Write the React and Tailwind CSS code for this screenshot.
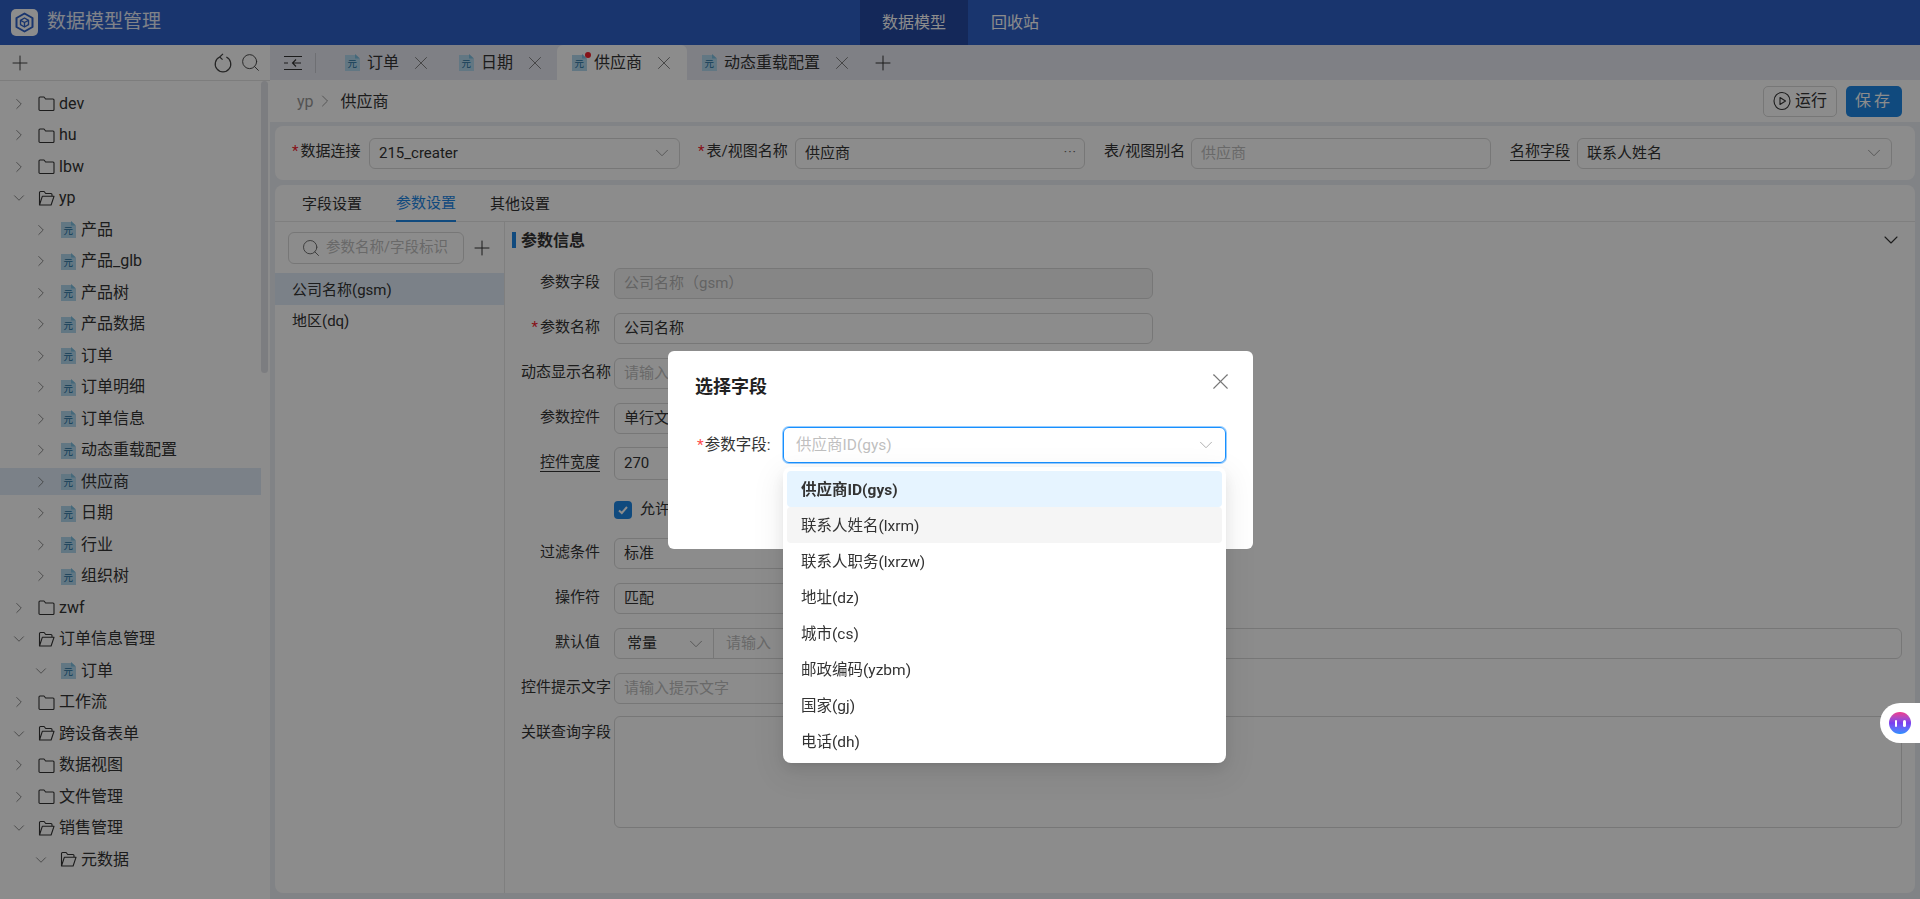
import React from 'react';
import { Plus, Search, X, ChevronDown, ChevronRight } from 'lucide-react';

const tree = [
  { name: 'dev', level: 0, type: 'folder' },
  { name: 'hu', level: 0, type: 'folder' },
  { name: 'lbw', level: 0, type: 'folder' },
  { name: 'yp', level: 0, type: 'folder', open: true },
  { name: '产品', level: 1, type: 'model' },
  { name: '产品_glb', level: 1, type: 'model' },
  { name: '产品树', level: 1, type: 'model' },
  { name: '产品数据', level: 1, type: 'model' },
  { name: '订单', level: 1, type: 'model' },
  { name: '订单明细', level: 1, type: 'model' },
  { name: '订单信息', level: 1, type: 'model' },
  { name: '动态重载配置', level: 1, type: 'model' },
  { name: '供应商', level: 1, type: 'model', active: true },
  { name: '日期', level: 1, type: 'model' },
  { name: '行业', level: 1, type: 'model' },
  { name: '组织树', level: 1, type: 'model' },
  { name: 'zwf', level: 0, type: 'folder' },
  { name: '订单信息管理', level: 0, type: 'folder', open: true },
  { name: '订单', level: 1, type: 'model', open: true },
  { name: '工作流', level: 0, type: 'folder' },
  { name: '跨设备表单', level: 0, type: 'folder', open: true },
  { name: '数据视图', level: 0, type: 'folder' },
  { name: '文件管理', level: 0, type: 'folder' },
  { name: '销售管理', level: 0, type: 'folder', open: true },
  { name: '元数据', level: 1, type: 'folder', open: true },
];

const tabs = [
  { name: '订单', width: 'w-[114px]' },
  { name: '日期', width: 'w-[113px]' },
  { name: '供应商', width: 'w-[130px]', active: true },
  { name: '动态重载配置', width: 'w-[178px]' },
];

const options = ['供应商ID(gys)', '联系人姓名(lxrm)', '联系人职务(lxrzw)', '地址(dz)', '城市(cs)', '邮政编码(yzbm)', '国家(gj)', '电话(dh)'];

function ModelIcon() {
  return (
    <svg width="15" height="17" viewBox="0 0 15 17" className="shrink-0">
      <path d="M0 1h10l5 4v12H0z" fill="#b3d9ee" />
      <path d="M10 0l5 4.500h-5z" fill="#7fbfe0" />
      <text x="7.200" y="13" textAnchor="middle" fontSize="9.500" fill="#1f6f9f">元</text>
    </svg>
  );
}

function FolderIcon({ open }) {
  return (
    <svg width="17" height="17" viewBox="0 0 17 17" fill="none" stroke="#333" strokeWidth="1.100" className="shrink-0">
      {open ? (
        <path d="M1.500 15V2.500a1 1 0 0 1 1-1h3.600l1.600 2h5.300a1 1 0 0 1 1 1v1.800M1.500 15h11.600l2.900-8.700H4.300L1.500 15z" strokeLinejoin="round" />
      ) : (
        <path d="M1 3a1 1 0 0 1 1-1h4l1.600 2H15a1 1 0 0 1 1 1v9.500a1 1 0 0 1-1 1H2a1 1 0 0 1-1-1z" strokeLinejoin="round" />
      )}
    </svg>
  );
}

function TreeRow({ item }) {
  const Arrow = item.open ? ChevronDown : ChevronRight;
  return (
    <div className="h-[31.5px] flex items-center">
      <div className={`h-[27px] w-full flex items-center ${item.active ? 'bg-[#e0ebf7]' : ''} ${item.level === 1 ? 'pl-[32px]' : 'pl-[10px]'}`}>
        <Arrow size={18} strokeWidth={1} className="text-[#666] shrink-0" />
        <span className="w-[9px] shrink-0" />
        <span className="w-[18px] flex justify-center shrink-0">{item.type === 'folder' ? <FolderIcon open={item.open} /> : <ModelIcon />}</span>
        <span className="ml-[4px] text-[16px] text-[#333] leading-none whitespace-nowrap">{item.name}</span>
      </div>
    </div>
  );
}

function Field({ className = '', value, placeholder, arrow, dots, disabled }) {
  return (
    <div className={`h-[31px] flex items-center justify-between border border-[#d9d9d9] rounded-[6px] px-[9px] text-[15px] shrink-0 ${disabled ? 'bg-[#f5f5f5] text-[#b5b5b5]' : 'bg-white text-[#333]'} ${className}`}>
      <span className={`whitespace-nowrap ${placeholder ? 'text-[#bfbfbf]' : ''}`}>{value || placeholder}</span>
      {arrow && <ChevronDown size={22} strokeWidth={1} className="text-[#999] shrink-0 -mr-[3px]" />}
      {dots && <span className="text-[#666] text-[13px] tracking-[1px] leading-none -mt-[4px] -mr-[2px]">···</span>}
    </div>
  );
}

function Label({ children, required, underline, className = '' }) {
  return (
    <span className={`text-[15px] text-[#333] whitespace-nowrap pb-[3px] shrink-0 ${className}`}>
      {required && <span className="text-[#f5222d] mr-[2px]">*</span>}
      <span className={underline ? 'border-b border-[#333]' : ''}>{children}</span>
    </span>
  );
}

function FormRow({ label, required, underline, long, className = '', children }) {
  return (
    <div className={`flex items-center ${className}`}>
      <div className={`w-[103px] flex justify-end shrink-0 ${long ? 'pr-[3px]' : 'pr-[14px]'}`}>
        <Label required={required} underline={underline}>{label}</Label>
      </div>
      {children}
    </div>
  );
}

function App() {
  return (
    <div className="h-screen overflow-hidden flex flex-col bg-white font-['Roboto','Noto_Sans_CJK_SC',sans-serif]">
      {/* Top bar */}
      <header className="h-[45px] shrink-0 bg-[#2f61c8] flex items-center">
        <div className="ml-[11px] w-[27px] h-[27px] bg-white rounded-[5px] flex items-center justify-center">
          <svg width="21" height="21" viewBox="0 0 21 21" fill="none" stroke="#2f61c8" strokeWidth="2" strokeLinejoin="round">
            <path d="M10.500 1.500l8 4.500v9l-8 4.500-8-4.500V6z" />
            <path d="M10.500 6l4 2.300v4.400l-4 2.300-4-2.300V8.300z" strokeWidth="1.400" />
            <path d="M6.500 8.300l4 2.200 4-2.200M10.500 10.500V15" strokeWidth="1.400" />
          </svg>
        </div>
        <span className="ml-[9px] w-[813px] text-[19px] text-white/90 whitespace-nowrap">数据模型管理</span>
        <div className="w-[108px] h-full bg-[#2549a3] flex items-center justify-center text-[16px] text-white">数据模型</div>
        <div className="ml-[23px] text-[16px] text-white">回收站</div>
      </header>

      <div className="flex-1 flex min-h-0">
        {/* Tree sidebar */}
        <aside className="w-[270px] shrink-0 flex flex-col bg-white">
          <div className="h-[36px] shrink-0 border-b border-[#e4e4e4] flex items-center pl-[8px] pr-[9px] text-[#444]">
            <Plus size={24} strokeWidth={1} />
            <svg width="20" height="20" viewBox="0 0 18 18" fill="none" stroke="#444" strokeWidth="1.100" className="ml-auto">
              <path d="M6 3.600a7 7 0 1 0 6 0M9 .8L6 3.600l2.600 2.400" />
            </svg>
            <Search size={21} strokeWidth={1.100} className="ml-[7px]" />
          </div>
          <div className="flex-1 flex min-h-0">
            <div className="flex-1 pt-[7px]">
              {tree.map((item, i) => <TreeRow key={i} item={item} />)}
            </div>
            <div className="w-[9px] shrink-0">
              <div className="w-[7px] h-[292px] rounded-[4px] bg-[#e2e4ea]" />
            </div>
          </div>
        </aside>

        <main className="flex-1 min-w-0 flex flex-col bg-[#eceef4]">
          {/* Tabs */}
          <div className="h-[35px] shrink-0 bg-[#e7e9f2] flex items-center">
            <svg width="18" height="16" viewBox="0 0 18 16" fill="none" stroke="#333" strokeWidth="1.100" className="ml-[14px] shrink-0">
              <path d="M0 1.500h18M0 14.500h18M0 8h4M17 8H9M12 4.500L8.500 8l3.500 3.500" />
            </svg>
            <span className="ml-[13px] w-px h-[20px] bg-[#c9cbd2]" />
            <div className="ml-[14px] flex h-full">
              {tabs.map((tab) => (
                <div key={tab.name} className={`${tab.width} h-full flex items-center pl-[15px] relative ${tab.active ? 'bg-white rounded-t-[6px]' : ''}`}>
                  <ModelIcon />
                  {tab.active && <span className="absolute left-[28px] top-[7px] w-[6px] h-[6px] rounded-full bg-[#f5222d]" />}
                  <span className="ml-[7px] text-[16px] text-[#333] whitespace-nowrap">{tab.name}</span>
                  <X size={22} strokeWidth={1} className="ml-[11px] text-[#777]" />
                </div>
              ))}
            </div>
            <Plus size={24} strokeWidth={1} className="ml-[6px] text-[#333]" />
          </div>

          {/* Breadcrumb */}
          <div className="h-[42px] shrink-0 bg-white flex items-center pl-[27px] pr-[18px]">
            <span className="text-[16px] text-[#999] pt-[2px]">yp</span>
            <ChevronRight size={20} strokeWidth={1} className="ml-[1px] text-[#888]" />
            <span className="ml-[6px] text-[16px] text-[#333] pt-[1px]">供应商</span>
            <div className="ml-auto flex items-center gap-[9px]">
              <div className="w-[74px] h-[31px] border border-[#d9d9d9] rounded-[5px] flex items-center justify-center gap-[4px] text-[16px] text-[#333]">
                <svg width="18" height="20" viewBox="0 0 18 20" fill="none" stroke="#333" strokeWidth="1.100">
                  <ellipse cx="9" cy="10" rx="8" ry="8.500" />
                  <path d="M7 6.500v7l5.500-3.500z" strokeLinejoin="round" />
                </svg>
                运行
              </div>
              <div className="w-[56px] h-[31px] rounded-[5px] bg-[#1e88e5] flex items-center justify-center text-[16px] text-white tracking-[3px]">保存</div>
            </div>
          </div>

          {/* Data source bar */}
          <div className="mx-[5px] mt-[4px] h-[54px] shrink-0 bg-white rounded-[8px] flex items-center pl-[17px]">
            <Label required className="w-[68px]">数据连接</Label>
            <Field className="ml-[9px] w-[311px]" value="215_creater" arrow />
            <Label required className="ml-[18px] w-[88px]">表/视图名称</Label>
            <Field className="ml-[9px] w-[290px]" value="供应商" dots />
            <Label className="ml-[19px] w-[79px]">表/视图别名</Label>
            <Field className="ml-[8px] w-[300px]" placeholder="供应商" />
            <Label underline className="ml-[19px] w-[58px]">名称字段</Label>
            <Field className="ml-[9px] w-[315px]" value="联系人姓名" arrow />
          </div>

          {/* Settings card */}
          <div className="mx-[5px] mt-[5px] mb-[6px] flex-1 min-h-0 bg-white rounded-[8px] flex flex-col">
            <div className="h-[37px] shrink-0 border-b border-[#e8e8e8] flex pl-[27px] gap-[34px] text-[15px] text-[#333]">
              <span className="h-full flex items-center pt-[2px]">字段设置</span>
              <span className="h-[37px] flex items-center pt-[2px] text-[#1e88e5] border-b-2 border-[#1e88e5]">参数设置</span>
              <span className="h-full flex items-center pt-[2px]">其他设置</span>
            </div>
            <div className="flex-1 flex min-h-0">
              {/* Param list */}
              <div className="w-[230px] shrink-0 border-r border-[#e8e8e8] pt-[10px]">
                <div className="flex items-center pl-[13px]">
                  <div className="w-[176px] h-[32px] border border-[#d9d9d9] rounded-[6px] flex items-center pl-[12px] text-[#666]">
                    <Search size={20} strokeWidth={1.100} className="shrink-0" />
                    <span className="ml-[5px] text-[14.500px] text-[#bfbfbf] whitespace-nowrap">参数名称/字段标识</span>
                  </div>
                  <Plus size={24} strokeWidth={1} className="ml-[6px] text-[#333]" />
                </div>
                <div className="mt-[9px] h-[32px] bg-[#e0ebf7] flex items-center pl-[17px] pt-[2px] text-[15px] text-[#333]">公司名称(gsm)</div>
                <div className="h-[31px] flex items-center pl-[17px] pt-[2px] text-[15px] text-[#333]">地区(dq)</div>
              </div>

              {/* Param form */}
              <div className="flex-1 min-w-0 pl-[6px] pr-[13px] pt-[8px]">
                <div className="flex items-center h-[20px] mb-[18px]">
                  <span className="w-[4px] h-[16px] bg-[#1e88e5] ml-[1px]" />
                  <span className="ml-[5px] pt-[2px] text-[16px] font-bold text-[#333]">参数信息</span>
                  <ChevronDown size={24} strokeWidth={1.100} className="ml-auto text-[#333] -mr-[1px]" />
                </div>
                <div className="flex flex-col">
                  <FormRow label="参数字段" className="mb-[14px]"><Field disabled className="w-[539px]" value="公司名称（gsm）" /></FormRow>
                  <FormRow label="参数名称" required className="mb-[14px]"><Field className="w-[539px]" value="公司名称" /></FormRow>
                  <FormRow label="动态显示名称" long className="mb-[14px]"><Field className="w-[539px]" placeholder="请输入" /></FormRow>
                  <FormRow label="参数控件" className="mb-[13px]"><Field className="w-[539px]" value="单行文本" arrow /></FormRow>
                  <FormRow label="控件宽度" underline className="mb-[14px]"><Field className="w-[539px] !h-[33px]" value="270" /></FormRow>
                  <div className="flex items-center h-[31px] pl-[103px] mb-[13px]">
                    <span className="w-[18px] h-[18px] rounded-[4px] bg-[#1e88e5] flex items-center justify-center">
                      <svg width="12" height="12" viewBox="0 0 12 12" fill="none" stroke="#fff" strokeWidth="2"><path d="M2 6.500l2.800 2.500L10 3" /></svg>
                    </span>
                    <span className="ml-[8px] text-[15px] text-[#333]">允许为空</span>
                  </div>
                  <FormRow label="过滤条件" className="mb-[14px]"><Field className="w-[539px]" value="标准" arrow /></FormRow>
                  <FormRow label="操作符" className="mb-[14px]"><Field className="w-[539px]" value="匹配" arrow /></FormRow>
                  <FormRow label="默认值" className="mb-[14px]">
                    <div className="flex-1 h-[31px] flex border border-[#d9d9d9] rounded-[6px] text-[15px]">
                      <div className="w-[99px] border-r border-[#d9d9d9] flex items-center justify-between pl-[12px] pr-[6px] text-[#333]">
                        常量
                        <ChevronDown size={22} strokeWidth={1} className="text-[#999]" />
                      </div>
                      <div className="flex-1 flex items-center pl-[12px] text-[#bfbfbf]">请输入</div>
                    </div>
                  </FormRow>
                  <FormRow label="控件提示文字" long className="mb-[12px]"><Field className="w-[539px]" placeholder="请输入提示文字" /></FormRow>
                  <div className="flex items-start">
                    <div className="w-[103px] flex justify-end pr-[3px] pt-[5px] shrink-0"><Label>关联查询字段</Label></div>
                    <div className="flex-1 h-[112px] border border-[#d9d9d9] rounded-[6px]" />
                  </div>
                </div>
              </div>
            </div>
          </div>
        </main>
      </div>

      {/* Mask + dialog */}
      <div className="fixed inset-0 bg-black/45">
        <div className="absolute left-[668px] top-[351px] w-[585px] h-[198px] bg-white rounded-[6px] px-[27px] pt-[23px]">
          <div className="flex items-start justify-between h-[26px]">
            <span className="text-[18px] font-bold text-[#222] leading-[26px]">选择字段</span>
            <X size={27} strokeWidth={1} className="text-[#777] -mt-[6px] -mr-[8px]" />
          </div>
          <div className="mt-[27px] flex items-center">
            <span className="text-[15.500px] text-[#333] w-[88px] shrink-0 whitespace-nowrap pl-[2px] pt-[2px]">
              <span className="text-[#ff4d4f] mr-[1px]">*</span>参数字段:
            </span>
            <div className="w-[443px] h-[36px] border border-[#1890ff] rounded-[6px] flex items-center justify-between pl-[12px] pr-[8px] shadow-[0_0_0_1px_rgba(24,144,255,0.45)]">
              <span className="text-[15.500px] text-[#bfbfbf] whitespace-nowrap pt-[2px]">供应商ID(gys)</span>
              <ChevronDown size={22} strokeWidth={1} className="text-[#aaa]" />
            </div>
          </div>
        </div>

        {/* Select dropdown */}
        <div className="absolute left-[783px] top-[467px] w-[443px] p-[4px] bg-white rounded-[8px] shadow-[0_6px_16px_rgba(0,0,0,0.08),0_3px_6px_-4px_rgba(0,0,0,0.12),0_9px_28px_8px_rgba(0,0,0,0.05)]">
          {options.map((opt, i) => (
            <div
              key={opt}
              className={`h-[36px] flex items-center pl-[14px] pt-[3px] rounded-[4px] text-[15.500px] text-[#333] whitespace-nowrap ${i === 0 ? 'bg-[#e6f4ff] font-bold' : ''} ${i === 1 ? 'bg-[#f5f5f5]' : ''}`}
            >
              {opt}
            </div>
          ))}
        </div>

        {/* Floating assistant */}
        <div className="absolute right-0 top-[703px] w-[40px] h-[40px] bg-white rounded-l-[20px] flex items-center pl-[9px]">
          <div className="w-[22px] h-[22px] rounded-full bg-gradient-to-b from-[#f0368c] via-[#7a3df0] to-[#1f8fff] flex items-center justify-center gap-[6px]">
            <span className="w-[2.500px] h-[7px] rounded-full bg-white" />
            <span className="w-[2.500px] h-[7px] rounded-full bg-white" />
          </div>
        </div>
      </div>
    </div>
  );
}

export default App;
